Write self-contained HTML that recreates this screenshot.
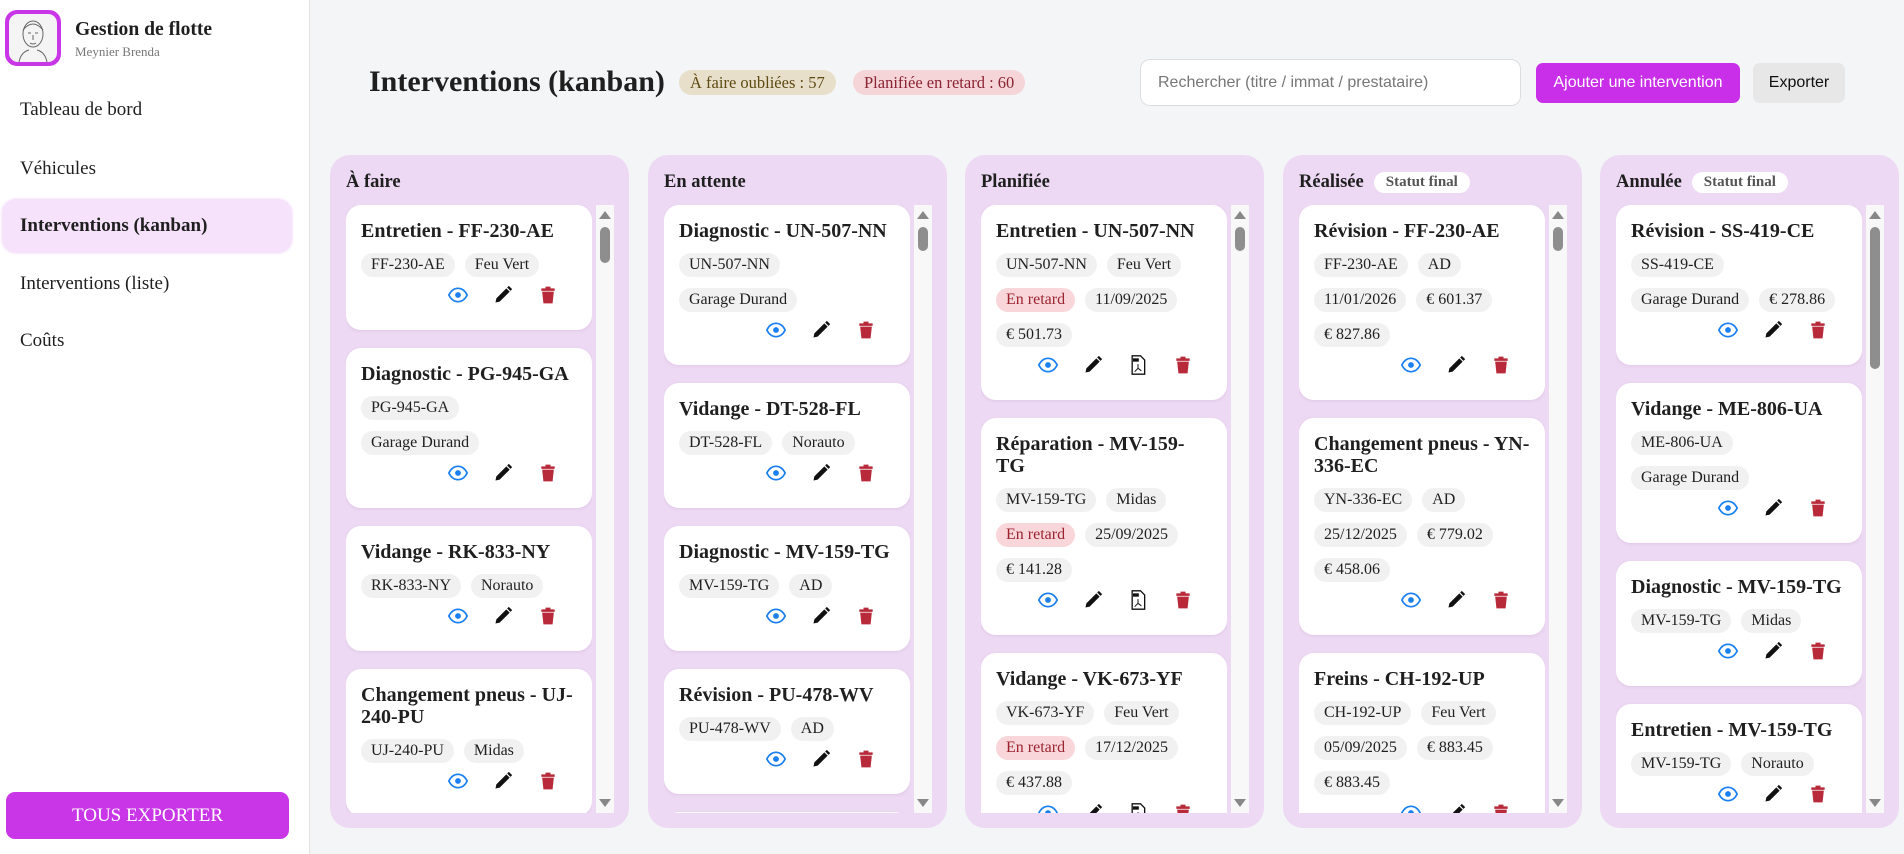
<!DOCTYPE html>
<html><head><meta charset="utf-8"><style>
*{box-sizing:border-box;margin:0;padding:0}
body{width:1904px;height:854px;overflow:hidden;background:#f4f5f7;font-family:"Liberation Serif",serif;color:#1f1f1f;position:relative}
.side{position:absolute;left:0;top:0;width:310px;height:854px;background:#fff;border-right:1px solid #e3e3e3}
.logo{position:absolute;left:5px;top:10px;width:56px;height:56px;border-radius:12px;background:#c936e8;padding:4px}
.logo div{width:100%;height:100%;border-radius:9px;background:#f4f4f4;overflow:hidden}
.brand{position:absolute;left:75px;top:19px;font-weight:bold;font-size:19.6px}
.sub{position:absolute;left:75px;top:44px;font-size:13px;color:#777}
.nav{position:absolute;left:20px;font-size:19px}
.active{position:absolute;left:2px;top:199px;width:290px;height:54px;background:#f6e3fb;border-radius:14px;box-shadow:0 0 3px #f0d6f8}
.tous{position:absolute;left:6px;top:792px;width:283px;height:47px;background:#c936e8;border-radius:9px;color:#fff;font-size:19px;text-align:center;line-height:47px}
h1{position:absolute;left:369px;top:65px;font-size:30px;font-weight:bold}
.bdg{position:absolute;top:70px;height:25px;border-radius:13px;font-size:16.5px;line-height:25px;padding:0 11px}
.search{position:absolute;left:1140px;top:59px;width:381px;height:47px;background:#fff;border:1px solid #ddd;border-radius:10px;font-family:"Liberation Sans",sans-serif;font-size:16px;color:#777;padding-left:17px;line-height:45px}
.btn{position:absolute;top:63px;height:40px;border-radius:7px;font-family:"Liberation Sans",sans-serif;font-size:16px;line-height:40px;text-align:center}
.col{position:absolute;top:155px;width:299px;height:673px;background:#edd9f3;border-radius:20px}
.ch{position:absolute;left:16px;top:17px;font-size:18.5px;font-weight:bold;display:flex;align-items:center}
.sf{margin-left:10px;background:#fff;border-radius:12px;font-size:15px;color:#555;padding:2px 12px;font-weight:bold}
.list{position:absolute;left:16px;top:50px;width:246px;height:608px;overflow:hidden}
.card{background:#fff;border-radius:15px;padding:15px 15px 20px;margin-bottom:18px;box-shadow:0 1px 3px rgba(150,100,170,.15)}
.t{font-size:20px;font-weight:bold;line-height:22px;margin-bottom:11px}
.row{display:flex;gap:10px;margin-bottom:11px;height:24px}
.tag{background:#f1f1f1;border-radius:12px;font-size:16px;line-height:24px;padding:0 10px;white-space:nowrap}
.late{background:#f8d6da;color:#9b2330}
.ic{display:flex;justify-content:flex-end;padding-right:7px;height:30px;margin-top:-8px;align-items:center}
.ic span{width:45px;display:flex;justify-content:center}
.sb{position:absolute;left:266px;top:50px;width:18px;height:608px;background:#f8f8f8}
.sb .up{position:absolute;left:3px;top:6px;border-left:6px solid transparent;border-right:6px solid transparent;border-bottom:8px solid #888}
.sb .dn{position:absolute;left:3px;bottom:6px;border-left:6px solid transparent;border-right:6px solid transparent;border-top:8px solid #888}
.sb .th{position:absolute;left:4px;top:22px;width:10px;background:#8e8e8e;border-radius:5px}
</style></head><body>
<div class="side">
 <div class="logo"><div><svg width="48" height="48" viewBox="0 0 48 48" fill="none" stroke="#666" stroke-width="1"><ellipse cx="24" cy="20" rx="10" ry="13"/><path d="M14 16q10-12 20 0M19 19h3M26 19h3M24 21v5M21 29q3 2 6 0M10 48q2-10 10-12M38 48q-2-10-10-12"/></svg></div></div>
 <div class="brand">Gestion de flotte</div>
 <div class="sub">Meynier Brenda</div>
 <div class="active"></div>
 <div class="nav" style="top:99px">Tableau de bord</div>
 <div class="nav" style="top:158px">Véhicules</div>
 <div class="nav" style="top:215px;font-weight:bold">Interventions (kanban)</div>
 <div class="nav" style="top:273px">Interventions (liste)</div>
 <div class="nav" style="top:330px">Coûts</div>
 <div class="tous">TOUS EXPORTER</div>
</div>
<h1>Interventions (kanban)</h1>
<div class="bdg" style="left:679px;background:#e8dfca;color:#5c4a12">À faire oubliées : 57</div>
<div class="bdg" style="left:853px;background:#f5d5d8;color:#8a2333">Planifiée en retard : 60</div>
<div class="search">Rechercher (titre / immat / prestataire)</div>
<div class="btn" style="left:1536px;width:204px;background:#c92fe8;color:#fff">Ajouter une intervention</div>
<div class="btn" style="left:1753px;width:92px;background:#e7e7e7;color:#111">Exporter</div>

<svg width="0" height="0" style="position:absolute">
<defs>
<symbol id="eye" viewBox="0 0 24 24"><path d="M1 12C4 6 8 4 12 4s8 2 11 8c-3 6-7 8-11 8S4 18 1 12z" fill="none" stroke="#1a7ff0" stroke-width="2"/><circle cx="12" cy="12" r="3.5" fill="#1a7ff0"/></symbol>
<symbol id="pen" viewBox="0 0 24 24"><path d="M3 21l1-5L16 4l4 4L8 20z M17 3l2-2 4 4-2 2z" fill="#111"/></symbol>
<symbol id="del" viewBox="0 0 24 24"><path d="M4 4h16v3H4z M9 2h6v2H9z M5 8h14l-1.5 14h-11z" fill="#b82a3a"/></symbol>
<symbol id="pdf" viewBox="0 0 24 24"><path d="M5 1h10l5 5v17H5z" fill="#fff" stroke="#111" stroke-width="1.6"/><path d="M6 4h7v4H6z" fill="#111"/><path d="M12 11v5l-4 4M12 16l4 3" stroke="#111" stroke-width="1.2" fill="none"/></symbol>
</defs></svg>

<div class="col" style="left:330px"><div class="ch">À faire</div>
<div class="list">
<div class="card"><div class="t">Entretien - FF-230-AE</div><div class="row"><span class="tag">FF-230-AE</span><span class="tag">Feu Vert</span></div><div class="ic"><span><svg width="20" height="20"><use href="#eye"/></svg></span><span><svg width="20" height="20"><use href="#pen"/></svg></span><span><svg width="20" height="20"><use href="#del"/></svg></span></div></div>
<div class="card"><div class="t">Diagnostic - PG-945-GA</div><div class="row"><span class="tag">PG-945-GA</span></div><div class="row"><span class="tag">Garage Durand</span></div><div class="ic"><span><svg width="20" height="20"><use href="#eye"/></svg></span><span><svg width="20" height="20"><use href="#pen"/></svg></span><span><svg width="20" height="20"><use href="#del"/></svg></span></div></div>
<div class="card"><div class="t">Vidange - RK-833-NY</div><div class="row"><span class="tag">RK-833-NY</span><span class="tag">Norauto</span></div><div class="ic"><span><svg width="20" height="20"><use href="#eye"/></svg></span><span><svg width="20" height="20"><use href="#pen"/></svg></span><span><svg width="20" height="20"><use href="#del"/></svg></span></div></div>
<div class="card"><div class="t">Changement pneus - UJ-240-PU</div><div class="row"><span class="tag">UJ-240-PU</span><span class="tag">Midas</span></div><div class="ic"><span><svg width="20" height="20"><use href="#eye"/></svg></span><span><svg width="20" height="20"><use href="#pen"/></svg></span><span><svg width="20" height="20"><use href="#del"/></svg></span></div></div>
</div><div class="sb"><div class="up"></div><div class="th" style="height:36px"></div><div class="dn"></div></div></div>

<div class="col" style="left:648px"><div class="ch">En attente</div>
<div class="list">
<div class="card"><div class="t">Diagnostic - UN-507-NN</div><div class="row"><span class="tag">UN-507-NN</span></div><div class="row"><span class="tag">Garage Durand</span></div><div class="ic"><span><svg width="20" height="20"><use href="#eye"/></svg></span><span><svg width="20" height="20"><use href="#pen"/></svg></span><span><svg width="20" height="20"><use href="#del"/></svg></span></div></div>
<div class="card"><div class="t">Vidange - DT-528-FL</div><div class="row"><span class="tag">DT-528-FL</span><span class="tag">Norauto</span></div><div class="ic"><span><svg width="20" height="20"><use href="#eye"/></svg></span><span><svg width="20" height="20"><use href="#pen"/></svg></span><span><svg width="20" height="20"><use href="#del"/></svg></span></div></div>
<div class="card"><div class="t">Diagnostic - MV-159-TG</div><div class="row"><span class="tag">MV-159-TG</span><span class="tag">AD</span></div><div class="ic"><span><svg width="20" height="20"><use href="#eye"/></svg></span><span><svg width="20" height="20"><use href="#pen"/></svg></span><span><svg width="20" height="20"><use href="#del"/></svg></span></div></div>
<div class="card"><div class="t">Révision - PU-478-WV</div><div class="row"><span class="tag">PU-478-WV</span><span class="tag">AD</span></div><div class="ic"><span><svg width="20" height="20"><use href="#eye"/></svg></span><span><svg width="20" height="20"><use href="#pen"/></svg></span><span><svg width="20" height="20"><use href="#del"/></svg></span></div></div>
<div class="card"><div class="t">Entretien - PG-945-GA</div></div>
</div><div class="sb"><div class="up"></div><div class="th" style="height:24px"></div><div class="dn"></div></div></div>

<div class="col" style="left:965px"><div class="ch">Planifiée</div>
<div class="list">
<div class="card"><div class="t">Entretien - UN-507-NN</div><div class="row"><span class="tag">UN-507-NN</span><span class="tag">Feu Vert</span></div><div class="row"><span class="tag late">En retard</span><span class="tag">11/09/2025</span></div><div class="row"><span class="tag">€ 501.73</span></div><div class="ic"><span><svg width="20" height="20"><use href="#eye"/></svg></span><span><svg width="20" height="20"><use href="#pen"/></svg></span><span><svg width="20" height="20"><use href="#pdf"/></svg></span><span><svg width="20" height="20"><use href="#del"/></svg></span></div></div>
<div class="card"><div class="t">Réparation - MV-159-TG</div><div class="row"><span class="tag">MV-159-TG</span><span class="tag">Midas</span></div><div class="row"><span class="tag late">En retard</span><span class="tag">25/09/2025</span></div><div class="row"><span class="tag">€ 141.28</span></div><div class="ic"><span><svg width="20" height="20"><use href="#eye"/></svg></span><span><svg width="20" height="20"><use href="#pen"/></svg></span><span><svg width="20" height="20"><use href="#pdf"/></svg></span><span><svg width="20" height="20"><use href="#del"/></svg></span></div></div>
<div class="card"><div class="t">Vidange - VK-673-YF</div><div class="row"><span class="tag">VK-673-YF</span><span class="tag">Feu Vert</span></div><div class="row"><span class="tag late">En retard</span><span class="tag">17/12/2025</span></div><div class="row"><span class="tag">€ 437.88</span></div><div class="ic"><span><svg width="20" height="20"><use href="#eye"/></svg></span><span><svg width="20" height="20"><use href="#pen"/></svg></span><span><svg width="20" height="20"><use href="#pdf"/></svg></span><span><svg width="20" height="20"><use href="#del"/></svg></span></div></div>
</div><div class="sb"><div class="up"></div><div class="th" style="height:24px"></div><div class="dn"></div></div></div>

<div class="col" style="left:1283px"><div class="ch">Réalisée<span class="sf">Statut final</span></div>
<div class="list">
<div class="card"><div class="t">Révision - FF-230-AE</div><div class="row"><span class="tag">FF-230-AE</span><span class="tag">AD</span></div><div class="row"><span class="tag">11/01/2026</span><span class="tag">€ 601.37</span></div><div class="row"><span class="tag">€ 827.86</span></div><div class="ic"><span><svg width="20" height="20"><use href="#eye"/></svg></span><span><svg width="20" height="20"><use href="#pen"/></svg></span><span><svg width="20" height="20"><use href="#del"/></svg></span></div></div>
<div class="card"><div class="t">Changement pneus - YN-336-EC</div><div class="row"><span class="tag">YN-336-EC</span><span class="tag">AD</span></div><div class="row"><span class="tag">25/12/2025</span><span class="tag">€ 779.02</span></div><div class="row"><span class="tag">€ 458.06</span></div><div class="ic"><span><svg width="20" height="20"><use href="#eye"/></svg></span><span><svg width="20" height="20"><use href="#pen"/></svg></span><span><svg width="20" height="20"><use href="#del"/></svg></span></div></div>
<div class="card"><div class="t">Freins - CH-192-UP</div><div class="row"><span class="tag">CH-192-UP</span><span class="tag">Feu Vert</span></div><div class="row"><span class="tag">05/09/2025</span><span class="tag">€ 883.45</span></div><div class="row"><span class="tag">€ 883.45</span></div><div class="ic"><span><svg width="20" height="20"><use href="#eye"/></svg></span><span><svg width="20" height="20"><use href="#pen"/></svg></span><span><svg width="20" height="20"><use href="#del"/></svg></span></div></div>
</div><div class="sb"><div class="up"></div><div class="th" style="height:24px"></div><div class="dn"></div></div></div>

<div class="col" style="left:1600px"><div class="ch">Annulée<span class="sf">Statut final</span></div>
<div class="list">
<div class="card"><div class="t">Révision - SS-419-CE</div><div class="row"><span class="tag">SS-419-CE</span></div><div class="row"><span class="tag">Garage Durand</span><span class="tag">€ 278.86</span></div><div class="ic"><span><svg width="20" height="20"><use href="#eye"/></svg></span><span><svg width="20" height="20"><use href="#pen"/></svg></span><span><svg width="20" height="20"><use href="#del"/></svg></span></div></div>
<div class="card"><div class="t">Vidange - ME-806-UA</div><div class="row"><span class="tag">ME-806-UA</span></div><div class="row"><span class="tag">Garage Durand</span></div><div class="ic"><span><svg width="20" height="20"><use href="#eye"/></svg></span><span><svg width="20" height="20"><use href="#pen"/></svg></span><span><svg width="20" height="20"><use href="#del"/></svg></span></div></div>
<div class="card"><div class="t">Diagnostic - MV-159-TG</div><div class="row"><span class="tag">MV-159-TG</span><span class="tag">Midas</span></div><div class="ic"><span><svg width="20" height="20"><use href="#eye"/></svg></span><span><svg width="20" height="20"><use href="#pen"/></svg></span><span><svg width="20" height="20"><use href="#del"/></svg></span></div></div>
<div class="card"><div class="t">Entretien - MV-159-TG</div><div class="row"><span class="tag">MV-159-TG</span><span class="tag">Norauto</span></div><div class="ic"><span><svg width="20" height="20"><use href="#eye"/></svg></span><span><svg width="20" height="20"><use href="#pen"/></svg></span><span><svg width="20" height="20"><use href="#del"/></svg></span></div></div>
</div><div class="sb"><div class="up"></div><div class="th" style="height:142px"></div><div class="dn"></div></div></div>
</body></html>
